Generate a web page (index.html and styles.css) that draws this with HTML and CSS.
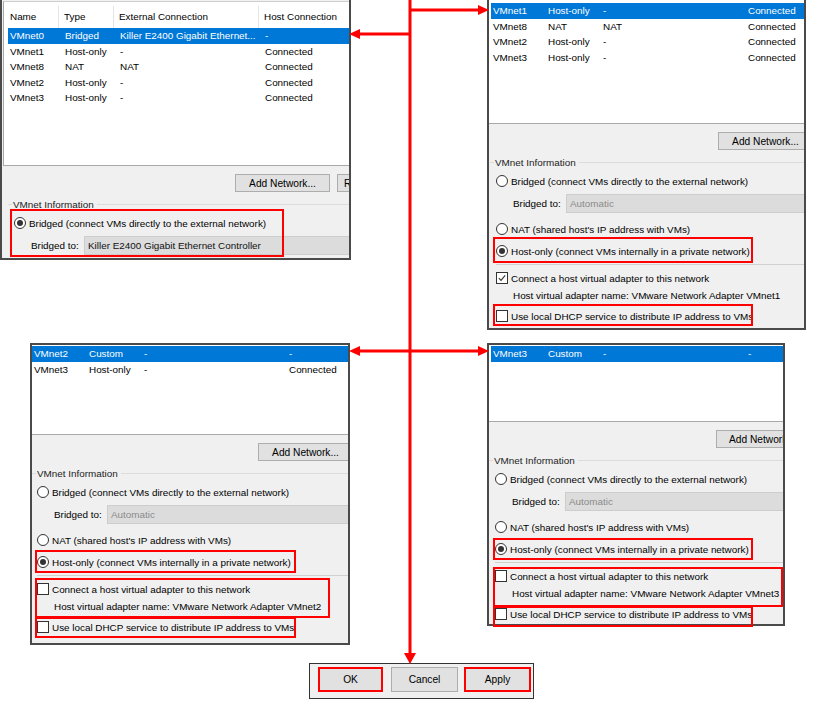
FILE: index.html
```html
<!DOCTYPE html>
<html>
<head>
<meta charset="utf-8">
<link rel="stylesheet" href="styles.css">
</head>
<body>
<div class="canvas">

  <section class="panel p-a">
    <div class="list">
      <div class="hdr"><span>Name</span><span>Type</span><span>External Connection</span><span>Host Connection</span></div>
      <div class="rows">
        <div class="row sel"><span>VMnet0</span><span>Bridged</span><span>Killer E2400 Gigabit Ethernet...</span><span>-</span></div>
        <div class="row"><span>VMnet1</span><span>Host-only</span><span>-</span><span>Connected</span></div>
        <div class="row"><span>VMnet8</span><span>NAT</span><span>NAT</span><span>Connected</span></div>
        <div class="row"><span>VMnet2</span><span>Host-only</span><span>-</span><span>Connected</span></div>
        <div class="row"><span>VMnet3</span><span>Host-only</span><span>-</span><span>Connected</span></div>
      </div>
    </div>
    <div class="toolbar"><div class="btn">Add Network...</div><div class="btn btn-cut">R</div></div>
    <div class="legend">VMnet Information</div>
    <div class="opt"><span class="radio on"></span>Bridged (connect VMs directly to the external network)</div>
    <div class="bridge"><span class="lbl">Bridged to:</span><span class="combo dark">Killer E2400 Gigabit Ethernet Controller</span></div>
  </section>

  <section class="panel p-b">
    <div class="list">
      <div class="rows">
        <div class="row sel"><span>VMnet1</span><span>Host-only</span><span>-</span><span>Connected</span></div>
        <div class="row"><span>VMnet8</span><span>NAT</span><span>NAT</span><span>Connected</span></div>
        <div class="row"><span>VMnet2</span><span>Host-only</span><span>-</span><span>Connected</span></div>
        <div class="row"><span>VMnet3</span><span>Host-only</span><span>-</span><span>Connected</span></div>
      </div>
    </div>
    <div class="toolbar"><div class="btn">Add Network...</div></div>
    <div class="legend">VMnet Information</div>
    <div class="opt"><span class="radio"></span>Bridged (connect VMs directly to the external network)</div>
    <div class="bridge"><span class="lbl">Bridged to:</span><span class="combo">Automatic</span></div>
    <div class="opt nat"><span class="radio"></span>NAT (shared host's IP address with VMs)</div>
    <div class="opt host"><span class="radio on"></span>Host-only (connect VMs internally in a private network)</div>
    <div class="sep"></div>
    <div class="chk-row"><span class="check on"><svg viewBox="0 0 12 12"><path d="M2.2 6.2 L4.8 8.8 L9.8 2.8" fill="none" stroke="#333" stroke-width="1.3"/></svg></span>Connect a host virtual adapter to this network</div>
    <div class="hv">Host virtual adapter name: VMware Network Adapter VMnet1</div>
    <div class="chk-row dhcp"><span class="check"></span>Use local DHCP service to distribute IP address to VMs</div>
  </section>

  <section class="panel p-c">
    <div class="list">
      <div class="rows">
        <div class="row sel"><span>VMnet2</span><span>Custom</span><span>-</span><span>-</span></div>
        <div class="row"><span>VMnet3</span><span>Host-only</span><span>-</span><span>Connected</span></div>
      </div>
    </div>
    <div class="toolbar"><div class="btn">Add Network...</div></div>
    <div class="legend">VMnet Information</div>
    <div class="opt"><span class="radio"></span>Bridged (connect VMs directly to the external network)</div>
    <div class="bridge"><span class="lbl">Bridged to:</span><span class="combo">Automatic</span></div>
    <div class="opt nat"><span class="radio"></span>NAT (shared host's IP address with VMs)</div>
    <div class="opt host"><span class="radio on"></span>Host-only (connect VMs internally in a private network)</div>
    <div class="sep"></div>
    <div class="chk-row"><span class="check"></span>Connect a host virtual adapter to this network</div>
    <div class="hv">Host virtual adapter name: VMware Network Adapter VMnet2</div>
    <div class="chk-row dhcp"><span class="check"></span>Use local DHCP service to distribute IP address to VMs</div>
  </section>

  <section class="panel p-d">
    <div class="list">
      <div class="rows">
        <div class="row sel"><span>VMnet3</span><span>Custom</span><span>-</span><span>-</span></div>
      </div>
    </div>
    <div class="toolbar"><div class="btn btn-left">Add Network</div></div>
    <div class="legend">VMnet Information</div>
    <div class="opt"><span class="radio"></span>Bridged (connect VMs directly to the external network)</div>
    <div class="bridge"><span class="lbl">Bridged to:</span><span class="combo">Automatic</span></div>
    <div class="opt nat"><span class="radio"></span>NAT (shared host's IP address with VMs)</div>
    <div class="opt host"><span class="radio on"></span>Host-only (connect VMs internally in a private network)</div>
    <div class="sep"></div>
    <div class="chk-row"><span class="check"></span>Connect a host virtual adapter to this network</div>
    <div class="hv">Host virtual adapter name: VMware Network Adapter VMnet3</div>
    <div class="chk-row dhcp"><span class="check"></span>Use local DHCP service to distribute IP address to VMs</div>
  </section>

  <section class="panel p-e">
    <div class="btn b-ok">OK</div>
    <div class="btn b-cancel">Cancel</div>
    <div class="btn b-apply">Apply</div>
  </section>

  <div class="hl hl-a"></div>
  <div class="hl hl-b1"></div>
  <div class="hl hl-b2"></div>
  <div class="hl hl-c1"></div>
  <div class="hl hl-c2"></div>
  <div class="hl hl-c3"></div>
  <div class="hl hl-d1"></div>
  <div class="hl hl-d2"></div>
  <div class="hl hl-d3"></div>
  <div class="hl hl-ok"></div>
  <div class="hl hl-apply"></div>

  <svg class="arrows" width="825" height="707" viewBox="0 0 825 707">
    <g stroke="#ff0000" stroke-width="3" fill="none">
      <line x1="410" y1="0" x2="410" y2="655"/>
      <line x1="410" y1="10" x2="480" y2="10"/>
      <line x1="410" y1="34" x2="358" y2="34"/>
      <line x1="358" y1="351" x2="480" y2="351"/>
    </g>
    <g fill="#ff0000">
      <polygon points="404,653 416,653 410,664"/>
      <polygon points="478,5 478,15 489,10"/>
      <polygon points="360,29 360,39 349,34"/>
      <polygon points="360,346 360,356 349,351"/>
      <polygon points="478,346 478,356 489,351"/>
    </g>
  </svg>
</div>
</body>
</html>
```

FILE: styles.css
```css
* { box-sizing: border-box; }
html, body { margin: 0; padding: 0; background: #fff; }
body {
  font-family: "Liberation Sans", Arial, sans-serif;
  font-size: 9.9px;
  color: #000;
}
.canvas {
  position: relative;
  width: 825px;
  height: 707px;
  overflow: hidden;
  background: #fff;
}

/* windows placed on the free canvas */
.panel {
  position: absolute;
  background: #f0f0f0;
  border: 2px solid #4a4a4a;
  overflow: hidden;
  --ox: 7px;
}
.p-a { left: 0; top: 0; width: 351px; height: 260px; border-top: 0; --ox: 12px; }
.p-b { left: 487px; top: 0; width: 319px; height: 330px; border-top: 0; --ox: 7px; }
.p-c { left: 30px; top: 343px; width: 320px; height: 302px; --ox: 5px; }
.p-d { left: 487px; top: 343px; width: 298px; height: 283px; --ox: 6px; }
.p-e {
  left: 309px; top: 663px; width: 225px; height: 36px;
  border: 1px solid #333;
  display: flex;
  align-items: flex-start;
  padding: 3px 0 0 8px;
}

/* list view */
.list {
  background: #fff;
  border-bottom: 1px solid #a9a9a9;
}
.p-a .list { height: 165px; margin-top: 1px; margin-left: 1px; border-top: 1px solid #cfcfcf; border-left: 1px solid #a9a9a9; }
.p-b .list { height: 124px; }
.p-c .list { height: 90px; }
.p-d .list { height: 77px; }

.hdr {
  display: grid;
  grid-template-columns: 55px 55px 145px 1fr;
  height: 26px;
  align-items: center;
  padding-top: 4px;
}
.hdr span { padding-left: 5px; border-right: 1px solid #e5e5e5; line-height: 22px; white-space: nowrap; }
.hdr span:first-child { padding-left: 6px; }
.hdr span:last-child { border-right: 0; }

.rows { padding-top: 1px; padding-left: 0; }
.p-a .rows { padding-left: 4px; padding-top: 0; }
.p-b .rows { padding-top: 3px; padding-left: 2px; }
.p-d .rows { padding-left: 2px; }

.row {
  display: grid;
  grid-template-columns: 55px 55px 145px 1fr;
  height: 15.5px;
  align-items: center;
  white-space: nowrap;
}
.row span { padding-left: 2px; overflow: hidden; }
.row.sel { background: #0078d7; color: #fff; }

/* buttons */
.toolbar {
  display: flex;
  gap: 7px;
  margin-top: 8px;
  height: 18px;
  white-space: nowrap;
}
.p-a .toolbar { padding-left: 233px; }
.p-b .toolbar { padding-left: 229px; }
.p-c .toolbar { padding-left: 226px; }
.p-d .toolbar { padding-left: 227px; }

.btn {
  flex: none;
  width: 95px;
  height: 18px;
  background: #e1e1e1;
  border: 1px solid #adadad;
  display: flex;
  align-items: center;
  justify-content: center;
  white-space: nowrap;
  font-size: 10.2px;
}
.btn-cut { width: 20px; justify-content: flex-start; padding-left: 6px; }
.btn-left { justify-content: flex-start; padding-left: 12px; }
.p-e .btn { height: 25px; }
.b-ok { width: 65px; }
.b-cancel { width: 67px; margin-left: 8px; }
.b-apply { width: 67px; margin-left: 6px; }

/* group box */
.legend {
  display: flex;
  align-items: center;
  height: 14px;
  margin-top: 5px;
  padding-left: calc(var(--ox) - 6px);
  color: #222;
  white-space: nowrap;
}
.legend::before {
  content: "";
  width: 4px;
  border-top: 1px solid #dcdcdc;
  margin-right: 1px;
}
.legend::after {
  content: "";
  flex: 1;
  border-top: 1px solid #dcdcdc;
  margin-left: 3px;
}

.opt {
  display: flex;
  align-items: center;
  height: 20px;
  margin-top: 2px;
  padding-left: var(--ox);
  white-space: nowrap;
}
.opt.nat { margin-top: 6px; }
.opt.host { margin-top: 2px; }

.radio {
  flex: none;
  width: 12px;
  height: 12px;
  border: 1px solid #333;
  border-radius: 50%;
  background: #fff;
  margin-right: 3px;
  display: flex;
  align-items: center;
  justify-content: center;
}
.radio.on::after {
  content: "";
  width: 6px;
  height: 6px;
  border-radius: 50%;
  background: #333;
}

.bridge {
  display: flex;
  align-items: center;
  height: 19px;
  margin-top: 3px;
  padding-left: calc(var(--ox) + 17px);
  white-space: nowrap;
}
.lbl { width: 53px; flex: none; }
.combo {
  flex: 1;
  height: 19px;
  background: #dcdcdc;
  border: 1px solid #cdcdcd;
  border-right: 0;
  color: #8a8a8a;
  display: flex;
  align-items: center;
  padding-left: 3px;
  overflow: hidden;
}
.combo.dark { color: #111; }

.sep {
  margin-top: 3px;
  margin-left: var(--ox);
  border-top: 1px solid #d0d0d0;
}

.chk-row {
  display: flex;
  align-items: center;
  height: 18px;
  margin-top: 4px;
  padding-left: var(--ox);
  white-space: nowrap;
}
.chk-row.dhcp { height: 20px; margin-top: 3px; }
.check {
  flex: none;
  width: 12px;
  height: 12px;
  border: 1px solid #333;
  background: #fff;
  margin-right: 3px;
  display: flex;
}
.check svg { width: 10px; height: 10px; }
.hv {
  height: 16px;
  display: flex;
  align-items: center;
  padding-left: calc(var(--ox) + 17px);
  white-space: nowrap;
}

/* red annotation boxes (overlays) */
.hl {
  position: absolute;
  border: 2px solid #f00;
  pointer-events: none;
}
.hl-a { left: 10px; top: 209px; width: 274px; height: 48px; }
.hl-b1 { left: 493px; top: 237px; width: 260px; height: 26px; }
.hl-b2 { left: 493px; top: 304px; width: 260px; height: 22px; }
.hl-c1 { left: 35px; top: 550px; width: 261px; height: 23px; }
.hl-c2 { left: 35px; top: 578px; width: 295px; height: 40px; }
.hl-c3 { left: 35px; top: 617px; width: 261px; height: 21px; }
.hl-d1 { left: 493px; top: 538px; width: 260px; height: 22px; }
.hl-d2 { left: 493px; top: 567px; width: 290px; height: 40px; }
.hl-d3 { left: 493px; top: 606px; width: 260px; height: 21px; }
.hl-ok { left: 318px; top: 667px; width: 65px; height: 25px; }
.hl-apply { left: 464px; top: 667px; width: 67px; height: 25px; }

.arrows {
  position: absolute;
  left: 0;
  top: 0;
  pointer-events: none;
}
```
